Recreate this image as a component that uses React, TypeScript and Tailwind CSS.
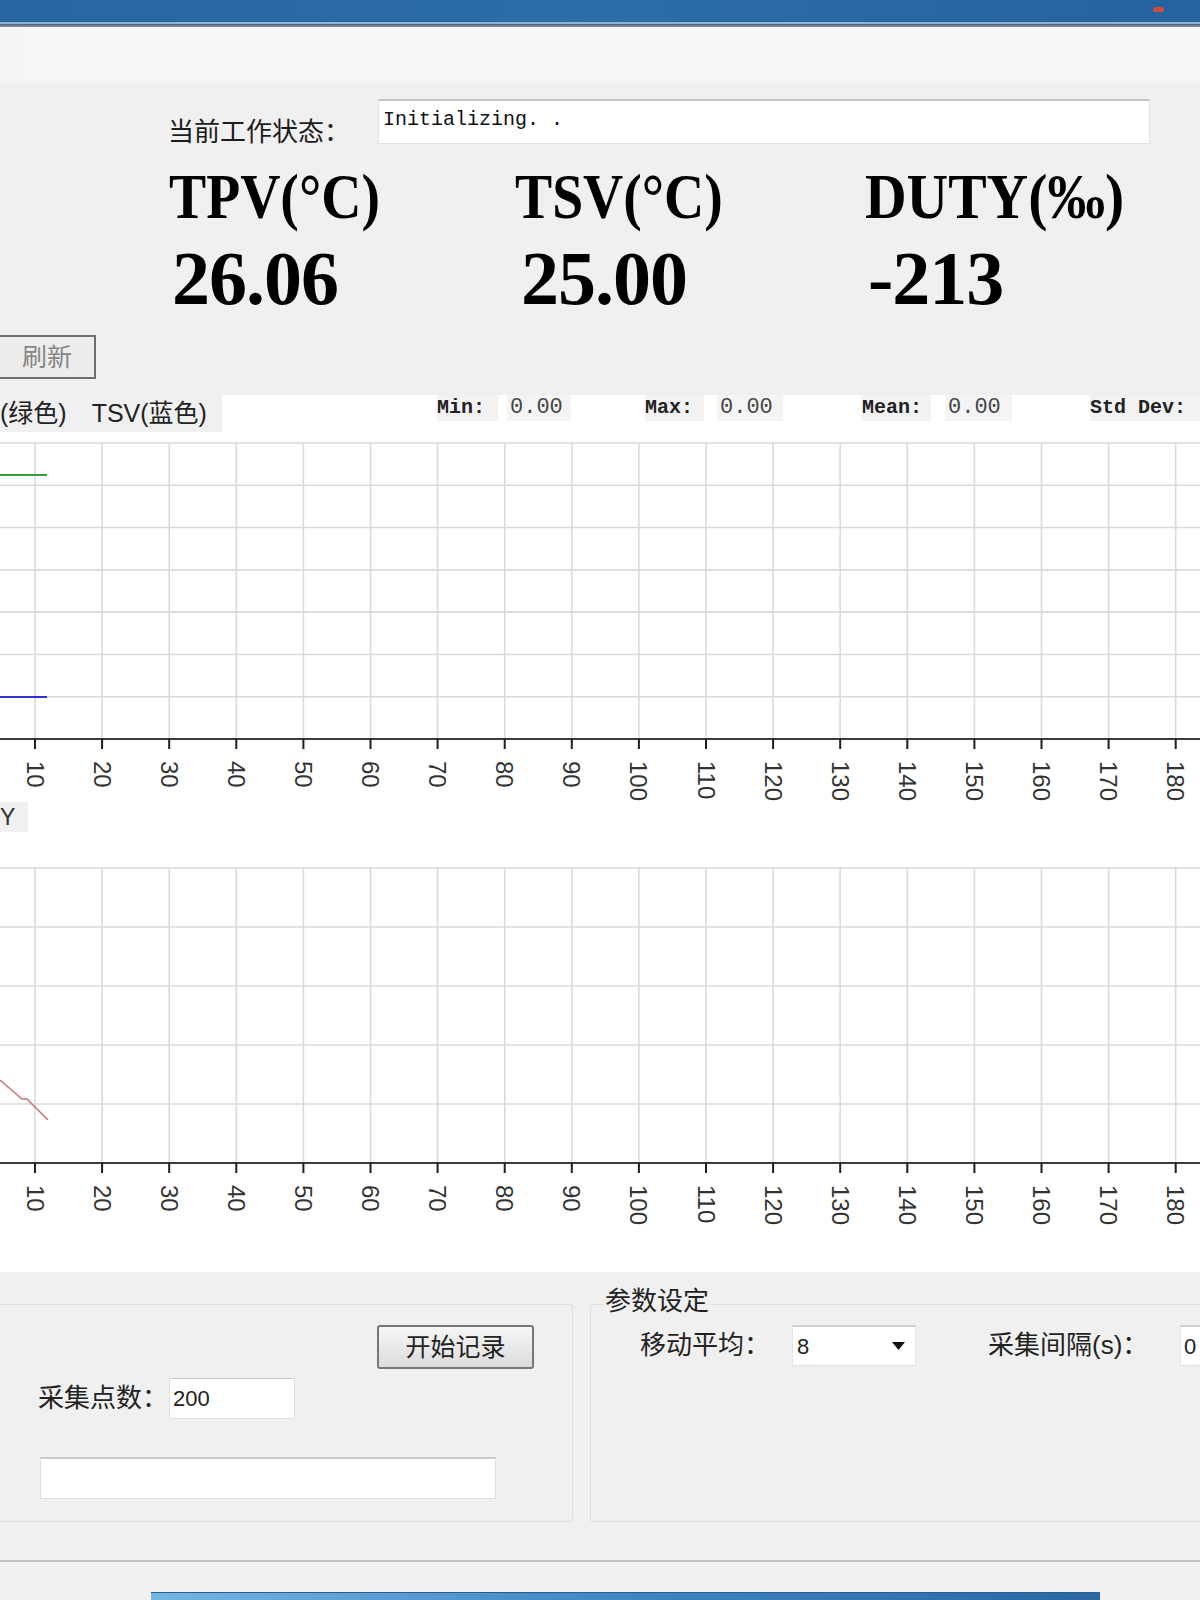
import React from 'react';

const cjk = "font-['Liberation_Sans','Noto_Sans_CJK_SC',sans-serif]";
const mono = "font-['Liberation_Mono','Noto_Sans_CJK_SC',monospace]";
const serif = "font-['Liberation_Serif',serif]";

const ticks = Array.from({ length: 18 }, (_, i) => ({ x: 35 + i * 67.1, label: String((i + 1) * 10) }));

function Chart({
  height,
  gridTop,
  axisY,
  rows,
  children,
}: {
  height: number;
  gridTop: number;
  axisY: number;
  rows: number;
  children?: React.ReactNode;
}) {
  const hLines = Array.from({ length: rows }, (_, i) => gridTop + ((axisY - gridTop) * i) / rows);
  return (
    <svg width={1200} height={height} className="block">
      {hLines.map((y) => (
        <line key={'h' + y} x1={0} x2={1200} y1={y} y2={y} stroke="#dadada" strokeWidth={1.6} />
      ))}
      {ticks.map((t) => (
        <line key={'v' + t.x} x1={t.x} x2={t.x} y1={gridTop} y2={axisY} stroke="#dadada" strokeWidth={1.6} />
      ))}
      {children}
      <line x1={0} x2={1200} y1={axisY} y2={axisY} stroke="#3c3c3c" strokeWidth={2} />
      {ticks.map((t) => (
        <line key={'t' + t.x} x1={t.x} x2={t.x} y1={axisY} y2={axisY + 10} stroke="#1e1e1e" strokeWidth={2} />
      ))}
      {ticks.map((t) => (
        <text
          key={'l' + t.x}
          transform={`translate(${t.x} ${axisY + 22}) rotate(90)`}
          dominantBaseline="central"
          fontSize={24}
          fontFamily="Liberation Sans, Arial, sans-serif"
          fill="#333"
        >
          {t.label}
        </text>
      ))}
    </svg>
  );
}

export default function App() {
  return (
    <div className="w-[1200px] h-[1600px] overflow-hidden flex flex-col bg-[#f0f0f0]">
      {/* window title bar */}
      <div className="relative h-[22px] bg-linear-to-r from-[#2766a3] via-[#2b6da9] to-[#2562a0]">
        <span className="absolute right-[36px] top-[7px] w-[11px] h-[5px] rounded-full bg-[#d3493b]" />
      </div>
      <div className="h-[2px] bg-[#8db3d6]" />
      <div className="h-[3px] bg-linear-to-b from-[#51606e] to-[#8a96a2]" />

      {/* toolbar strip */}
      <div className="h-[55px] bg-[#f4f4f4] pl-[24px] pt-[2px]">
        <div className="h-[50px] bg-[#f7f7f7]" />
      </div>

      {/* readouts */}
      <div className="h-[313px] flex flex-col bg-[#f0f0f0]">
        <div className="mt-[17px] h-[45px] flex items-start">
          <span className={`${cjk} ml-[168px] w-[210px] mt-[20px] text-[26px] leading-[26px] text-[#1c1c1c]`}>当前工作状态：</span>
          <div className="w-[772px] h-[45px] bg-white border border-[#e2e2e2] border-t-2 border-t-[#c6c6c6] pl-[4px]">
            <span className={`${mono} text-[20px] leading-[38px] text-[#111]`}>Initializing. .</span>
          </div>
        </div>

        <div className={`${serif} mt-[21px] h-[64px] grid grid-cols-[346px_350px_1fr] pl-[169px] font-bold text-[64px] leading-none text-black`}>
          <span className="inline-block origin-left scale-x-[0.87] whitespace-nowrap">TPV(°C)</span>
          <span className="inline-block origin-left scale-x-[0.87] whitespace-nowrap">TSV(°C)</span>
          <span className="inline-block origin-left scale-x-[0.9] whitespace-nowrap">DUTY(‰)</span>
        </div>

        <div className={`${serif} mt-[11px] h-[76px] grid grid-cols-[346px_350px_1fr] pl-[172px] font-bold text-[76px] leading-none tracking-[-1px] text-black`}>
          <span>26.06</span>
          <span className="pl-[3px]">25.00</span>
          <span>-213</span>
        </div>

        <div className="mt-[19px] h-[44px]">
          <button className={`${cjk} ml-[-2px] w-[98px] h-[44px] border-2 border-[#6f6f6f] bg-[#ededed] text-[25px] text-[#858585] leading-none`}>
            刷新
          </button>
        </div>
      </div>

      {/* charts */}
      <div className="h-[877px] bg-white flex flex-col">
        <div className="h-[37px] flex items-start">
          <div className={`${cjk} shrink-0 w-[222px] h-[37px] bg-[#f0f0f0] flex items-center text-[25px] text-[#222] whitespace-nowrap`}>
            <span className="ml-[0px]">(绿色)</span>
            <span className="ml-[25px]">TSV(蓝色)</span>
          </div>
          <span className={`${mono} shrink-0 ml-[215px] w-[61px] h-[26px] bg-[#f2f2f2] text-[20px] font-bold leading-[26px] text-[#222]`}>Min:</span>
          <span className={`${mono} shrink-0 ml-[9px] w-[64px] h-[26px] bg-[#f4f4f4] pl-[3px] text-[22px] leading-[26px] text-[#444]`}>0.00</span>
          <span className={`${mono} shrink-0 ml-[74px] w-[59px] h-[26px] bg-[#f2f2f2] text-[20px] font-bold leading-[26px] text-[#222]`}>Max:</span>
          <span className={`${mono} shrink-0 ml-[13px] w-[66px] h-[26px] bg-[#f4f4f4] pl-[3px] text-[22px] leading-[26px] text-[#444]`}>0.00</span>
          <span className={`${mono} shrink-0 ml-[79px] w-[69px] h-[26px] bg-[#f2f2f2] text-[20px] font-bold leading-[26px] text-[#222]`}>Mean:</span>
          <span className={`${mono} shrink-0 ml-[14px] w-[67px] h-[26px] bg-[#f4f4f4] pl-[3px] text-[22px] leading-[26px] text-[#444]`}>0.00</span>
          <span className={`${mono} shrink-0 ml-[78px] w-[110px] h-[26px] bg-[#f2f2f2] text-[20px] font-bold leading-[26px] text-[#222] whitespace-nowrap`}>Std Dev:</span>
        </div>

        <Chart height={370} gridTop={11} axisY={307} rows={7}>
          <line x1={0} x2={47} y1={43} y2={43} stroke="#3a9c3a" strokeWidth={2} />
          <line x1={0} x2={47} y1={265} y2={265} stroke="#2f2fd6" strokeWidth={2} />
        </Chart>

        <div className="h-[30px]">
          <div className={`${cjk} w-[28px] h-[30px] bg-[#f0f0f0] text-[23px] leading-[30px] text-[#333]`}>Y</div>
        </div>

        <Chart height={440} gridTop={36} axisY={331} rows={5}>
          <polyline points="0,248 22,267 27,267 48,288" fill="none" stroke="#c07a7a" strokeWidth={1.6} />
        </Chart>
      </div>

      {/* settings */}
      <div className="h-[288px] bg-[#f0f0f0] flex items-start pt-[32px]">
        <div className="relative shrink-0 ml-[-3px] w-[576px] h-[218px] border border-[#d9dfe3] rounded-[3px] flex flex-col pt-[20px]">
          <div className="h-[44px]">
            <button className={`${cjk} ml-[379px] w-[157px] h-[44px] rounded-[3px] border-2 border-[#777] bg-linear-to-b from-[#f6f6f6] to-[#dcdcdc] text-[25px] text-[#222] leading-none`}>
              开始记录
            </button>
          </div>
          <div className="mt-[9px] h-[41px] flex items-center">
            <span className={`${cjk} ml-[40px] w-[131px] text-[26px] text-[#222]`}>采集点数：</span>
            <div className="w-[126px] h-[41px] bg-white border border-[#e0e0e0] border-t-[#cfcfcf] pl-[3px] flex items-center">
              <span className="font-['Liberation_Sans',sans-serif] text-[22px] text-[#222]">200</span>
            </div>
          </div>
          <div className="mt-[38px] ml-[42px] w-[456px] h-[42px] bg-white border border-[#e0e0e0] border-t-2 border-t-[#c9c9c9]" />
        </div>

        <div className="relative shrink-0 ml-[17px] w-[640px] h-[218px] border border-[#d9dfe3] rounded-[3px] pt-[20px]">
          <span className={`${cjk} absolute left-[12px] top-[-19px] px-[2px] bg-[#f0f0f0] text-[26px] leading-[30px] text-[#222]`}>参数设定</span>
          <div className="h-[41px] flex items-center">
            <span className={`${cjk} shrink-0 ml-[49px] w-[152px] text-[26px] text-[#222]`}>移动平均：</span>
            <div className="shrink-0 w-[124px] h-[41px] bg-white border border-[#e3e3e3] border-t-2 border-t-[#d0d0d0] flex items-center pl-[4px] pr-[10px]">
              <span className="font-['Liberation_Sans',sans-serif] text-[22px] text-[#222] flex-1">8</span>
              <svg width="13" height="8" viewBox="0 0 13 8">
                <polygon points="0,0 13,0 6.5,8" fill="#111" />
              </svg>
            </div>
            <span className={`${cjk} shrink-0 ml-[72px] w-[192px] text-[26px] text-[#222] whitespace-nowrap`}>采集间隔(s)：</span>
            <div className="shrink-0 w-[60px] h-[41px] bg-white border border-[#e3e3e3] border-t-2 border-t-[#d0d0d0] pl-[3px] flex items-center">
              <span className="font-['Liberation_Sans',sans-serif] text-[22px] text-[#222]">0</span>
            </div>
          </div>
        </div>
      </div>

      {/* status / taskbar edge */}
      <div className="h-[2px] bg-[#c4c4c4]" />
      <div className="h-[30px] bg-[#f3f0f0]" />
      <div className="h-[8px] bg-[#f3f0f0] pl-[151px]">
        <div className="w-[949px] h-[8px] border-t border-[#2c5e8c] bg-linear-to-r from-[#73b4e2] via-[#3f85c2] to-[#2a67a3]" />
      </div>
    </div>
  );
}
